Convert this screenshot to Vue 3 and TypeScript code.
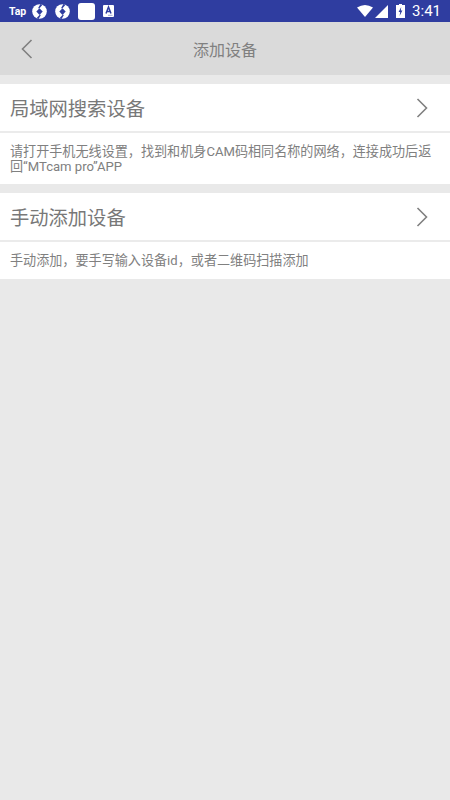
<script setup lang="ts">
const sections = [
  { title: '局域网搜索设备', desc: '请打开手机无线设置，找到和机身CAM码相同名称的网络，连接成功后返回“MTcam pro”APP' },
  { title: '手动添加设备', desc: '手动添加，要手写输入设备id，或者二维码扫描添加' },
]
</script>

<template>
  <div class="page">
    <div class="status">
      <div class="status-left">
        <span class="tap">Tap</span>
        <svg v-for="n in 2" :key="n" class="sync" viewBox="0 0 16 16">
          <circle cx="8" cy="8" r="7.8" fill="#fff" />
          <path d="M4.6 8 L8 4.4 L11.4 8 L8 11.6 Z" fill="#2f3da0" />
          <path d="M9 0 L6.4 4.6 L8 4.4 L11 1 Z M7 16 L9.6 11.4 L8 11.6 L5 15 Z" fill="#2f3da0" />
        </svg>
        <span class="white-box"></span>
        <svg class="app-a" viewBox="0 0 11 12">
          <rect width="11" height="12" rx="1" fill="#fff" />
          <path d="M3 8.5 L5.5 2 L8 8.5 M4 6.4 H7" stroke="#2f3da0" stroke-width="1.5" fill="none" />
          <path d="M5 10.3 H9.5" stroke="#a0a6d4" stroke-width="1" />
        </svg>
      </div>
      <div class="status-right">
        <svg class="wifi" viewBox="0 0 16 12"><path d="M0 2.5 Q8 -2.5 16 2.5 L8 12 Z" fill="#fff" /></svg>
        <svg class="signal" viewBox="0 0 13 13"><path d="M0 13 L13 0 V13 Z" fill="#fff" /></svg>
        <svg class="battery" viewBox="0 0 9 14">
          <path d="M3 0 H6 V1 H9 V14 H0 V1 H3 Z" fill="#fff" />
          <path d="M5.2 3 L2.6 8 H4.2 L3.6 12 L6.4 6.6 H4.8 Z" fill="#2f3da0" />
        </svg>
        <span class="time">3:41</span>
      </div>
    </div>
    <header class="nav">
      <svg class="back" viewBox="0 0 12 20"><path d="M10.5 1 L1.5 10 L10.5 19" fill="none" stroke="#808080" stroke-width="1.6" /></svg>
      <span class="nav-title">添加设备</span>
    </header>
    <section v-for="s in sections" :key="s.title" class="section">
      <div class="row">
        <span class="row-title">{{ s.title }}</span>
        <svg class="chev" viewBox="0 0 12 20"><path d="M1.5 1 L10.5 10 L1.5 19" fill="none" stroke="#808080" stroke-width="1.6" /></svg>
      </div>
      <p class="desc">{{ s.desc }}</p>
    </section>
  </div>
</template>

<style>
html, body { margin: 0; padding: 0; }
</style>

<style scoped>
.page {
  width: 450px;
  height: 800px;
  overflow: hidden;
  background: #e9e9e9;
  font-family: "Roboto", "Noto Sans CJK SC", sans-serif;
  display: flex;
  flex-direction: column;
}
.status {
  height: 22px;
  background: #2f3da0;
  display: flex;
  justify-content: space-between;
  align-items: center;
  color: #fff;
  flex-shrink: 0;
}
.status-left {
  display: flex;
  align-items: center;
  padding-left: 9px;
}
.tap { font-size: 10.5px; font-weight: 700; width: 23px; }
.sync { width: 15px; height: 15px; margin-right: 8px; }
.white-box { width: 17px; height: 17px; background: #fff; border-radius: 3px; margin-right: 8px; }
.app-a { width: 11px; height: 12px; }
.status-right {
  display: flex;
  align-items: center;
  padding-right: 9px;
}
.wifi { width: 16px; height: 12px; margin-right: 2px; }
.signal { width: 13px; height: 13px; margin-right: 8px; }
.battery { width: 9px; height: 14px; margin-right: 7px; }
.time { font-size: 15px; line-height: 22px; }
.nav {
  height: 53px;
  background: #dadada;
  display: flex;
  align-items: center;
  justify-content: center;
  position: relative;
  flex-shrink: 0;
}
.nav-title { font-size: 16px; color: #808080; }
.back { position: absolute; left: 21px; top: 17px; width: 12px; height: 20px; }
.section { margin-top: 9px; background: #fff; }
.row {
  height: 47px;
  display: flex;
  align-items: center;
  justify-content: space-between;
  padding: 0 22px 0 10px;
  border-bottom: 2px solid #ebebeb;
}
.row-title { font-size: 19.3px; color: #787878; }
.chev { width: 12px; height: 20px; }
.desc {
  margin: 0;
  padding: 12px 10px 10.3px;
  font-size: 13.1px;
  line-height: 14.5px;
  color: #808080;
}
</style>
